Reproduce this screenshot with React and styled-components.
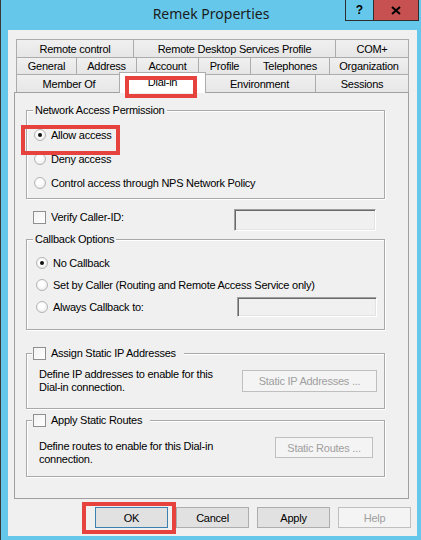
import styled, { createGlobalStyle } from 'styled-components'

const GlobalStyle = createGlobalStyle`
  html, body {
    margin: 0;
    padding: 0;
  }
  body {
    width: 421px;
    height: 540px;
    overflow: hidden;
    background: #65c8eb;
    font-family: "Liberation Sans", Arial, sans-serif;
  }
`

const Window = styled.div`
  position: relative;
  width: 421px;
  height: 540px;
  box-sizing: border-box;
  background: #65c8eb;
  border-left: 1px solid #3a3a3a;
  display: flex;
  flex-direction: column;
  font-size: 11px;
  letter-spacing: -0.25px;
  color: #000;
`

const TitleBar = styled.div`
  flex: none;
  height: 30px;
  display: grid;
  grid-template-columns: 1fr auto 1fr;
`

const Title = styled.div`
  grid-column: 2;
  font-family: "Noto Sans", "Open Sans", sans-serif;
  font-size: 14px;
  letter-spacing: 0;
  line-height: 28px;
  color: #1b1b1b;
`

const Controls = styled.div`
  grid-column: 3;
  justify-self: end;
  align-self: start;
  display: flex;
  margin-right: 2px;
`

const CaptionButton = styled.div`
  box-sizing: border-box;
  width: ${p => p.$w}px;
  height: 21px;
  display: flex;
  align-items: center;
  justify-content: center;
  background: ${p => p.$bg};
  border: 1px solid #2e2e2e;
  border-top: none;
  border-right: ${p => (p.$last ? '1px solid #2e2e2e' : 'none')};
  font-weight: bold;
  font-size: 12px;
  letter-spacing: 0;
  color: #000;
`

const Client = styled.div`
  flex: 1;
  margin: 0 4px 4px 7px;
  background: #f0f0f0;
  padding: 9px 7px 8px 6px;
  display: flex;
  flex-direction: column;
`

const TabStrip = styled.div`
  padding: 0 2px;
  display: flex;
  flex-direction: column;
`

const TabRow = styled.div`
  height: ${p => p.$h}px;
  display: flex;
  align-items: flex-start;
`

const Tab = styled.div`
  flex: none;
  box-sizing: border-box;
  width: ${p => p.$w + 1}px;
  height: ${p => p.$h}px;
  margin-right: -1px;
  border: 1px solid #acacac;
  border-bottom: none;
  background: linear-gradient(#f0f0f0, #e6e6e6);
  text-align: center;
  line-height: ${p => p.$h - 2}px;
  padding-top: 1px;
  white-space: nowrap;
`

const ActiveTab = styled(Tab)`
  position: relative;
  z-index: 1;
  width: ${p => p.$w + 5}px;
  height: 21px;
  margin: -2px -3px 0 -2px;
  background: #fff;
  line-height: 17px;
`

const Page = styled.div`
  flex: 1;
  margin-right: 1px;
  border: 1px solid #a0a0a0;
  background: #f0f0f0;
  padding: 0 23px 0 11px;
  display: flex;
  flex-direction: column;
`

const Group = styled.div`
  margin-top: ${p => p.$mt}px;
  border: 1px solid #a9a9a9;
  box-shadow: 1px 1px 0 #fff, inset 1px 1px 0 #fff;
  padding-bottom: ${p => p.$pb}px;
`

const Legend = styled.div`
  width: fit-content;
  height: 13px;
  line-height: 13px;
  margin: -7px 0 0 ${p => p.$ml}px;
  padding: 0 ${p => p.$pr}px 0 ${p => p.$pl}px;
  background: #f0f0f0;
  display: flex;
  align-items: center;
  gap: 5px;
  white-space: nowrap;
`

const OptionList = styled.div`
  margin-top: ${p => p.$mt}px;
  padding-left: ${p => p.$pl}px;
  padding-right: 7px;
  display: flex;
  flex-direction: column;
`

const OptionRow = styled.div`
  height: ${p => p.$h}px;
  display: flex;
  align-items: center;
  gap: 5px;
  white-space: nowrap;
`

const Radio = styled.span`
  flex: none;
  box-sizing: border-box;
  width: 12px;
  height: 12px;
  border-radius: 50%;
  border: 1px solid #b4b4b4;
  background: radial-gradient(circle at 45% 40%, #ffffff 30%, #e2e2e2 100%);
  display: flex;
  align-items: center;
  justify-content: center;

  &::after {
    content: '';
    display: ${p => (p.$checked ? 'block' : 'none')};
    width: 4px;
    height: 4px;
    border-radius: 50%;
    background: #111;
  }
`

const Check = styled.span`
  flex: none;
  box-sizing: border-box;
  width: 13px;
  height: 13px;
  border: 1px solid #8f8f8f;
  background: linear-gradient(135deg, #f2f2f2, #ffffff);
`

const Field = styled.div`
  flex: none;
  box-sizing: border-box;
  width: ${p => p.$w}px;
  height: ${p => p.$h}px;
  margin-left: auto;
  margin-right: ${p => p.$mr}px;
  background: #f0f0f0;
  border: 1px solid;
  border-color: #a0a0a0 #ffffff #ffffff #a0a0a0;
  box-shadow: inset 1px 1px 0 #696969, inset -1px -1px 0 #e3e3e3;
`

const CallerRow = styled.div`
  margin-top: 10px;
  height: 22px;
  display: flex;
  align-items: flex-start;
`

const CheckLabel = styled.div`
  margin: 2px 0 0 7px;
  height: 13px;
  line-height: 13px;
  display: flex;
  align-items: center;
  gap: 5px;
`

const DetailRow = styled.div`
  margin-top: ${p => p.$mt}px;
  padding-left: 12px;
  display: flex;
  align-items: flex-start;
`

const Description = styled.div`
  margin-top: ${p => p.$mt}px;
  line-height: 13px;
`

const Button = styled.div`
  flex: none;
  box-sizing: border-box;
  width: ${p => p.$w}px;
  height: ${p => p.$h || 21}px;
  display: flex;
  align-items: center;
  justify-content: center;
  background: ${p => (p.$disabled ? '#f4f4f4' : '#e1e1e1')};
  border: 1px solid ${p => (p.$default ? '#3c7fb1' : p.$disabled ? '#bfbfbf' : '#adadad')};
  color: ${p => (p.$disabled ? '#a0a0a0' : '#000')};
  white-space: nowrap;
`

const SideButton = styled(Button)`
  margin-top: ${p => p.$mt}px;
  margin-left: auto;
  margin-right: ${p => p.$mr}px;
`

const ButtonBar = styled.div`
  flex: none;
  margin-top: 8px;
  margin-right: -1px;
  display: flex;
  justify-content: flex-end;
  gap: 8px;
`

const Callout = styled.div`
  position: absolute;
  z-index: 2;
  box-sizing: border-box;
  border: 4px solid #e6433e;
  pointer-events: none;
`

const tabRows = [
  { h: 18, tabs: [['Remote control', 117], ['Remote Desktop Services Profile', 202], ['COM+', 73]] },
  {
    h: 17,
    tabs: [['General', 60], ['Address', 60], ['Account', 62], ['Profile', 52], ['Telephones', 79], ['Organization', 79]],
  },
  { h: 18, tabs: [['Member Of', 105], ['Dial-in', 82, true], ['Environment', 112], ['Sessions', 93]] },
]

const callouts = [
  { left: 124, top: 76, width: 72, height: 22 },
  { left: 20, top: 125, width: 99, height: 30 },
  { left: 81, top: 502, width: 94, height: 32 },
]

function CloseGlyph() {
  return (
    <svg width="10" height="9" viewBox="0 0 10 9">
      <path d="M1 1 L9 8 M9 1 L1 8" stroke="#000" strokeWidth="2" />
    </svg>
  )
}

export default function App() {
  return (
    <>
      <GlobalStyle />
      <Window>
        <TitleBar>
          <Title>Remek Properties</Title>
          <Controls>
            <CaptionButton $w={28} $bg="#65c8eb">?</CaptionButton>
            <CaptionButton $w={46} $bg="#c75050" $last>
              <CloseGlyph />
            </CaptionButton>
          </Controls>
        </TitleBar>

        <Client>
          <TabStrip>
            {tabRows.map((row, i) => (
              <TabRow key={i} $h={row.h}>
                {row.tabs.map(([label, w, active]) =>
                  active ? (
                    <ActiveTab key={label} $w={w} $h={row.h}>
                      {label}
                    </ActiveTab>
                  ) : (
                    <Tab key={label} $w={w} $h={row.h}>
                      {label}
                    </Tab>
                  )
                )}
              </TabRow>
            ))}
          </TabStrip>

          <Page>
            <Group $mt={17} $pb={3}>
              <Legend $ml={6} $pl={2} $pr={3}>Network Access Permission</Legend>
              <OptionList $mt={6} $pl={7}>
                <OptionRow $h={24}>
                  <Radio $checked />
                  Allow access
                </OptionRow>
                <OptionRow $h={24}>
                  <Radio />
                  Deny access
                </OptionRow>
                <OptionRow $h={24}>
                  <Radio />
                  Control access through NPS Network Policy
                </OptionRow>
              </OptionList>
            </Group>

            <CallerRow>
              <CheckLabel>
                <Check />
                Verify Caller-ID:
              </CheckLabel>
              <Field $w={142} $h={22} $mr={9} />
            </CallerRow>

            <Group $mt={8} $pb={11}>
              <Legend $ml={6} $pl={2} $pr={2}>Callback Options</Legend>
              <OptionList $mt={6} $pl={9}>
                <OptionRow $h={22}>
                  <Radio $checked />
                  No Callback
                </OptionRow>
                <OptionRow $h={22}>
                  <Radio />
                  Set by Caller (Routing and Remote Access Service only)
                </OptionRow>
                <OptionRow $h={22}>
                  <Radio />
                  Always Callback to:
                  <Field $w={140} $h={20} $mr={0} />
                </OptionRow>
              </OptionList>
            </Group>

            <Group $mt={23} $pb={14}>
              <Legend $ml={5} $pl={1} $pr={8}>
                <Check />
                Assign Static IP Addresses
              </Legend>
              <DetailRow $mt={8}>
                <Description $mt={0}>
                  Define IP addresses to enable for this
                  <br />
                  Dial-in connection.
                </Description>
                <SideButton $w={135} $h={22} $mt={2} $mr={7} $disabled>
                  Static IP Addresses ...
                </SideButton>
              </DetailRow>
            </Group>

            <Group $mt={11} $pb={10}>
              <Legend $ml={5} $pl={1} $pr={8}>
                <Check />
                Apply Static Routes
              </Legend>
              <DetailRow $mt={10}>
                <Description $mt={3}>
                  Define routes to enable for this Dial-in
                  <br />
                  connection.
                </Description>
                <SideButton $w={98} $mt={0} $mr={11} $disabled>
                  Static Routes ...
                </SideButton>
              </DetailRow>
            </Group>
          </Page>

          <ButtonBar>
            <Button $w={73} $default>OK</Button>
            <Button $w={73}>Cancel</Button>
            <Button $w={73}>Apply</Button>
            <Button $w={73} $disabled>Help</Button>
          </ButtonBar>
        </Client>

        {callouts.map((c, i) => (
          <Callout key={i} style={c} />
        ))}
      </Window>
    </>
  )
}
